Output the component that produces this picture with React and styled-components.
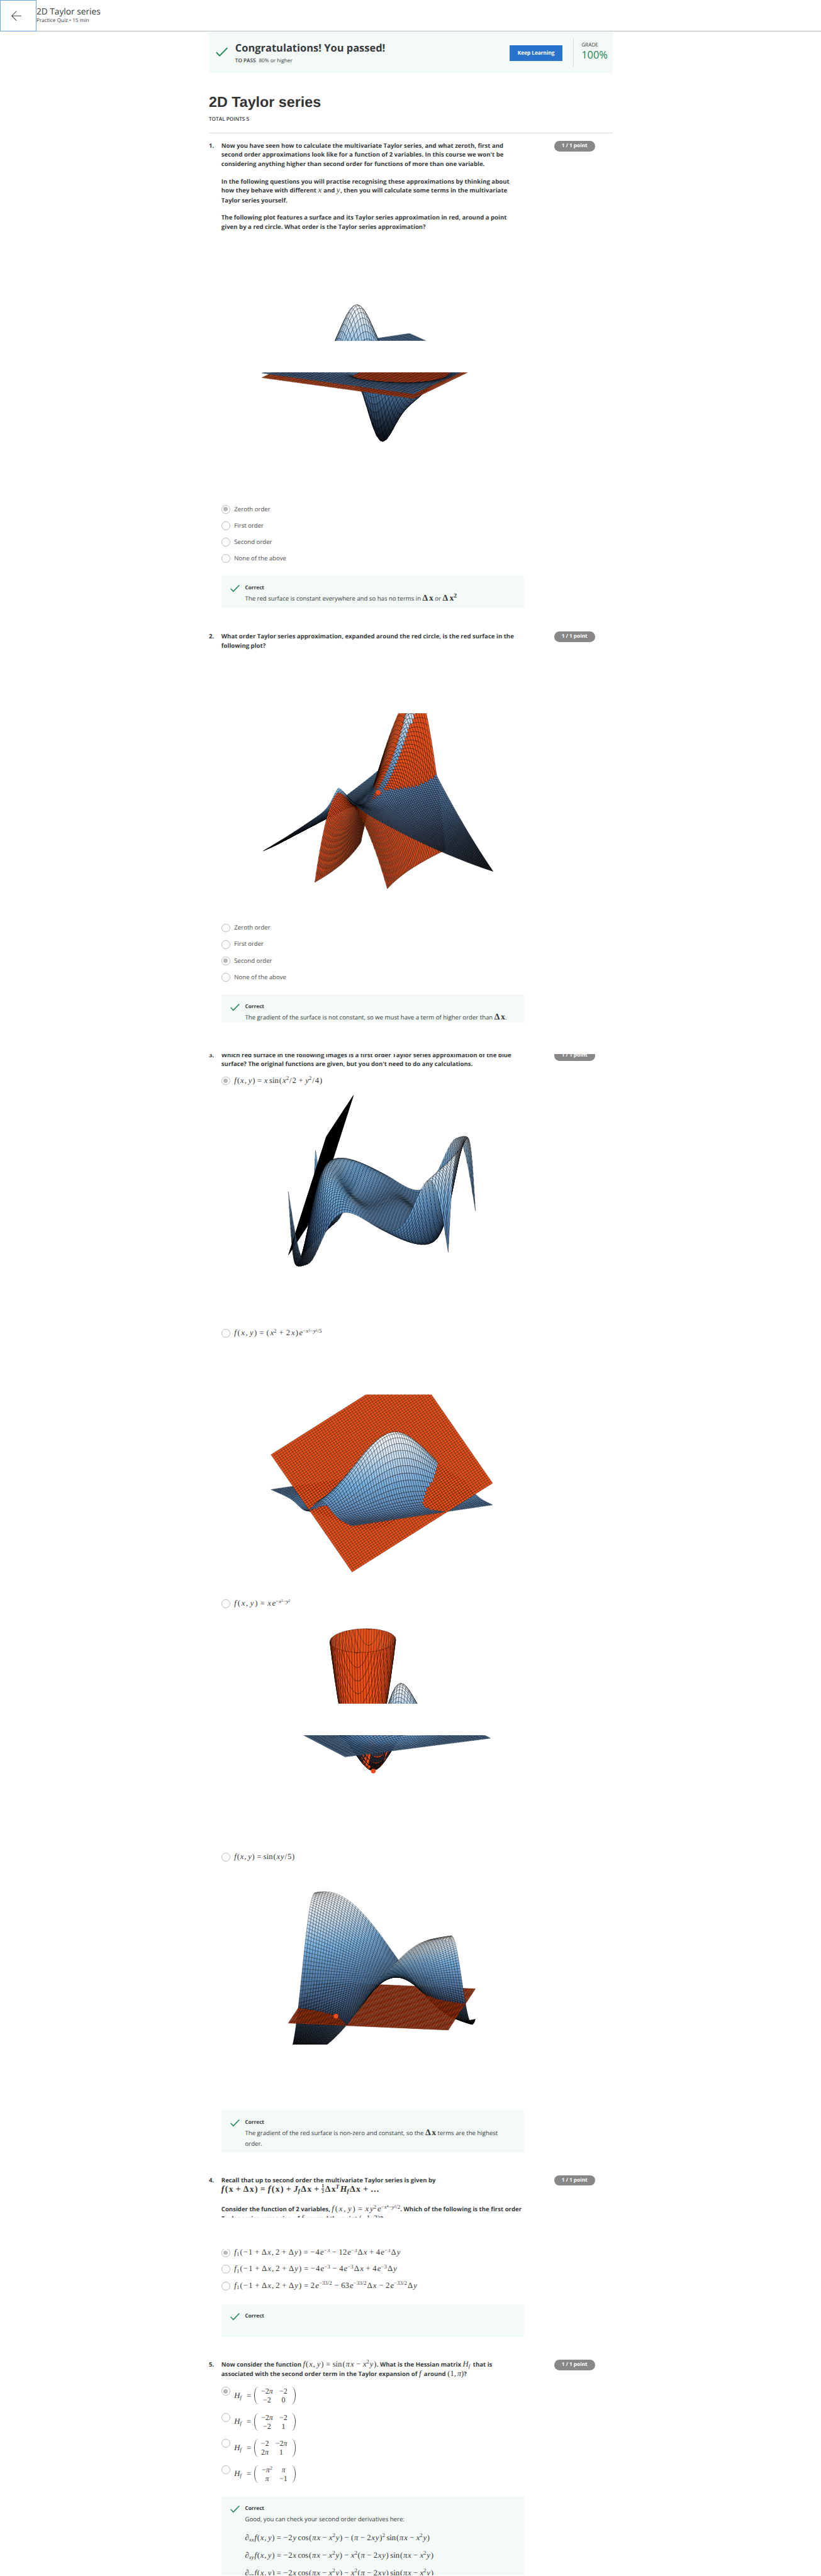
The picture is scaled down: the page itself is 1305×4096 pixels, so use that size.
import React, { useMemo } from "react";
import styled, { createGlobalStyle } from "styled-components";

/* 1rem is ten design pixels */
const Global = createGlobalStyle`
  html { font-size: 6.8585px; background: #fff; }
  body { margin: 0; color: #373a3c; text-rendering: geometricPrecision; }
  *, *::before, *::after { box-sizing: border-box; }
`;

const Page = styled.div`
  width: 190.28rem;
  height: 597.1rem;
  overflow: hidden;
  font-family: "Open Sans", "Noto Sans", sans-serif;
  font-size: 1.4rem;
  line-height: 2.1rem;
`;

const TopBar = styled.header`
  display: flex;
  height: 7.3rem;
  border-bottom: 1px solid #b8bcbf;
`;

const BackButton = styled.button`
  display: flex;
  align-items: center;
  justify-content: center;
  width: 8.45rem;
  height: 7.3rem;
  padding: 0 0.9rem 0 0;
  border: 1px solid #6aa9ea;
  background: #fff;
`;

const TopTitles = styled.div`
  display: flex;
  flex-direction: column;
  padding-top: 1.4rem;
`;

const TopTitle = styled.span`
  font-size: 2rem;
  line-height: 2.6rem;
`;

const TopSub = styled.span`
  font-size: 1.2rem;
  line-height: 1.8rem;
`;

const Main = styled.main`
  width: 93.6rem;
  margin-left: 48.4rem;
`;

const Banner = styled.section`
  display: flex;
  align-items: center;
  height: 9.6rem;
  background: #f3faf8;
  padding-left: 1.6rem;
`;

const BannerText = styled.div`
  flex: 1;
  margin: 0.4rem 0 0 1.7rem;
`;

const BannerTitle = styled.h2`
  margin: 0;
  font-size: 2.4rem;
  font-weight: 700;
  line-height: 3.2rem;
  white-space: nowrap;
`;

const BannerNote = styled.p`
  margin: 0.5rem 0 0;
  font-size: 1.2rem;
  line-height: 1.8rem;
  b { font-weight: 600; margin-right: 0.4rem; }
`;

const KeepLearning = styled.button`
  width: 12.3rem;
  height: 3.6rem;
  margin-top: 0.4rem;
  padding: 0;
  border: 0;
  background: #2a73cc;
  color: #fff;
  font: 700 1.2rem/3.6rem "Open Sans", sans-serif;
  white-space: nowrap;
`;

const Grade = styled.div`
  display: flex;
  flex-direction: column;
  width: 9.2rem;
  height: 6.8rem;
  margin-left: 2.4rem;
  padding: 0.9rem 0 0 1.8rem;
  border-left: 1px solid #dcdfdf;
  font-size: 1.2rem;
  line-height: 1.8rem;
  strong { color: #1f8354; font-size: 2.4rem; font-weight: 400; line-height: 2.6rem; }
`;

const QuizTitle = styled.h1`
  margin: 4.6rem 0 0;
  font: 700 3.4rem/4.4rem "Liberation Sans", Arial, sans-serif;
  color: #333;
`;

const TotalPoints = styled.p`
  margin: 1rem 0 0;
  height: 4rem;
  border-bottom: 1px solid #dcdcdc;
  font-size: 1.2rem;
  font-weight: 600;
  line-height: 1.8rem;
`;

const Question = styled.section`
  display: grid;
  grid-template-columns: 2.9rem 77.1rem 9.5rem;
  align-items: start;
  margin-top: ${(p) => p.$gap}rem;
`;

const Cutoff = styled.div`
  overflow: hidden;
  margin-top: ${(p) => p.$gap || 0}rem;
  height: ${(p) => p.$height}rem;
  &&& > * { margin-top: ${(p) => -(p.$hide || 0)}rem; }
`;

const Number = styled.span`
  display: block;
  padding-top: ${(p) => p.$drop || 0.1}rem;
  font-weight: 700;
`;

const Body = styled.div`
  display: flex;
  flex-direction: column;
  width: 70.1rem;
  padding-top: ${(p) => (p.$drop === undefined ? 0.1 : p.$drop)}rem;
`;

const Badge = styled.span`
  display: block;
  width: 9.5rem;
  height: 2.4rem;
  border-radius: 1.2rem;
  background: #888;
  color: #fff;
  font-size: 1.2rem;
  font-weight: 700;
  line-height: 2.4rem;
  text-align: center;
`;

const Line = styled.p`
  margin: ${(p) => p.$gap || 0}rem 0 0;
  height: ${(p) => p.$height || 2.1}rem;
  font-weight: ${(p) => (p.$light ? 400 : 700)};
  line-height: ${(p) => p.$height || 2.1}rem;
  white-space: nowrap;
`;

const Options = styled.div`
  display: flex;
  flex-direction: column;
  margin-top: ${(p) => p.$gap || 0}rem;
`;

const Option = styled.label`
  display: flex;
  align-items: ${(p) => (p.$tall ? "flex-start" : "center")};
  height: ${(p) => p.$height || 3.8}rem;
  color: #4a4a4a;
  white-space: nowrap;
`;

const Radio = styled.span`
  display: flex;
  align-items: center;
  justify-content: center;
  width: 2rem;
  height: 2rem;
  margin-right: 1rem;
  flex: none;
  border: 0.2rem solid #b8b8b8;
  border-radius: 50%;
  &::after {
    content: "";
    width: 1rem;
    height: 1rem;
    border-radius: 50%;
    background: ${(p) => (p.$on ? "#b8b8b8" : "transparent")};
  }
`;

const Feedback = styled.div`
  display: flex;
  height: ${(p) => p.$height}rem;
  margin-top: ${(p) => p.$gap}rem;
  padding: 1.85rem 0 0 2.1rem;
  background: #f3faf8;
`;

const FeedbackText = styled.div`
  margin-left: 1.2rem;
  white-space: nowrap;
`;

const FeedbackTitle = styled.div`
  font-size: 1.2rem;
  font-weight: 700;
  line-height: 2.1rem;
`;

const Drawing = styled.svg`
  display: block;
  width: 70.1rem;
  height: ${(p) => p.$height}rem;
`;

/* ---------- formulas ---------- */

const Formula = styled.span`
  display: inline-flex;
  align-items: baseline;
  justify-content: space-between;
  width: ${(p) => p.$width}rem;
  height: 2rem;
  color: #333;
  font-family: "Liberation Serif", serif;
  font-size: ${(p) => (p.$bold ? 2 : 1.85)}rem;
  font-weight: ${(p) => (p.$bold ? 700 : 400)};
  line-height: 2rem;
`;

const SPACE = {
  binary: "0 0.2em",
  comma: "0 0.14em 0 0",
  word: "0 0 0 0.14em",
};

const Token = styled.span`
  display: inline-flex;
  align-items: baseline;
  margin: ${(p) => SPACE[p.$kind] || 0};
  font-style: ${(p) => (p.$italic ? "italic" : "normal")};
`;

const Raised = styled.span`
  position: relative;
  top: -0.52em;
  font-size: 0.7em;
  line-height: 1;
`;

const Lowered = styled.span`
  position: relative;
  top: 0.25em;
  font-size: 0.7em;
  line-height: 1;
`;

const Fraction = styled.span`
  display: inline-flex;
  flex-direction: column;
  align-items: center;
  align-self: center;
  font-size: 1.15rem;
  line-height: 1.15rem;
  span:first-child { border-bottom: 1px solid #333; }
`;

const Glyph = styled.span`
  font-style: ${(p) => (p.$italic ? "italic" : "normal")};
`;

const isVar = (s) => /^[a-zA-Zπ∂]$/.test(s);

function tokenize(src) {
  const out = [];
  let i = 0;
  while (i < src.length) {
    const word = /^(sin|cos)/.exec(src.slice(i));
    const prev = out.length ? out[out.length - 1].t : "(";
    if (word) {
      out.push({ t: word[0], kind: prev === "=" ? undefined : "word" });
      i += 3;
    } else if ((src[i] === "^" || src[i] === "_") && out.length) {
      const end = src.indexOf("}", i);
      out[out.length - 1][src[i]] = src.slice(i + 2, end);
      i = end + 1;
    } else if (/\d/.test(src[i])) {
      const n = /^\d+/.exec(src.slice(i))[0];
      out.push({ t: n });
      i += n.length;
    } else {
      let kind;
      if (src[i] === "=") kind = "binary";
      if (/[+−]/.test(src[i]) && !/[(=]/.test(prev)) kind = "binary";
      if (src[i] === ",") kind = "comma";
      if (src[i] === "=" && i === src.length - 1) kind = undefined;
      out.push({ t: src[i], kind });
      i += 1;
    }
  }
  return out;
}

const letters = (s) => s.split("").map((c, k) => <Glyph key={k} $italic={isVar(c)}>{c}</Glyph>);

function Tex({ src, w, bold, upright }) {
  return (
    <Formula $width={w} $bold={bold}>
      {tokenize(src).map((k, i) =>
        k.t === "½" ? (
          <Fraction key={i}><span>1</span><span>2</span></Fraction>
        ) : (
          <Token key={i} $kind={k.kind} $italic={isVar(k.t) && !(upright && k.t === "x")}>
            {k.t}
            {k["^"] && <Raised>{letters(k["^"])}</Raised>}
            {k["_"] && <Lowered>{letters(k["_"])}</Lowered>}
          </Token>
        )
      )}
    </Formula>
  );
}

const MatrixRow = styled.span`
  display: flex;
  align-items: center;
  height: 4.1rem;
`;

const MatrixBox = styled.span`
  display: grid;
  grid-template-columns: ${(p) => p.$cols};
  grid-template-rows: 2.05rem 2.05rem;
  justify-items: center;
  width: 9.6rem;
  height: 4.1rem;
  margin-left: 0.7rem;
  padding: 0 1rem;
  border: solid #444;
  border-width: 0 1px;
  border-radius: 1rem / 2.05rem;
  color: #333;
  font-family: "Liberation Serif", serif;
  font-size: 1.75rem;
  line-height: 2.05rem;
`;

const Cell = styled.span`
  display: inline-flex;
  align-items: baseline;
  line-height: 2.05rem;
`;

function Matrix({ cells, cols }) {
  return (
    <MatrixRow>
      <Tex src="H_{f}=" w={3.9} />
      <MatrixBox $cols={cols}>
        {cells.map((c, i) => (
          <Cell key={i}>
            {letters(c.replace("²", ""))}
            {c.includes("²") && <Raised>2</Raised>}
          </Cell>
        ))}
      </MatrixBox>
    </MatrixRow>
  );
}

/* ---------- surface plots ---------- */

const PITCH_SIN = 0.2588;
const PITCH_COS = 0.9659;
const RED = "#ea4f18";
const STOPS = [
  [0, [0, 0, 0]],
  [0.2, [32, 47, 66]],
  [0.35, [66, 100, 138]],
  [0.5, [86, 132, 180]],
  [0.68, [120, 178, 226]],
  [0.85, [200, 222, 240]],
  [1, [255, 255, 255]],
];

function blue(t) {
  const v = Math.min(1, Math.max(0, t));
  for (let i = 1; i < STOPS.length; i++) {
    const [b, cb] = STOPS[i];
    const [a, ca] = STOPS[i - 1];
    if (v <= b) {
      const k = (v - a) / (b - a);
      return "rgb(" + ca.map((c, j) => Math.round(c + (cb[j] - c) * k)).join(",") + ")";
    }
  }
  return "#fff";
}

function clipHeight(poly, limit, sign) {
  const out = [];
  poly.forEach((a, i) => {
    const b = poly[(i + 1) % poly.length];
    const da = sign * (limit - a.z);
    const db = sign * (limit - b.z);
    if (da >= 0) out.push(a);
    if (da >= 0 !== db >= 0) {
      const k = da / (da - db);
      out.push({ x: a.x + (b.x - a.x) * k, y: a.y + (b.y - a.y) * k, d: a.d + (b.d - a.d) * k, z: limit });
    }
  });
  return out;
}

function buildCells({ cx, cy, s, yaw, top = 0, bottom = 1e5, surfaces, n = 60 }) {
  const a = (yaw * Math.PI) / 180;
  const ca = Math.cos(a);
  const sa = Math.sin(a);
  const cells = [];
  surfaces.forEach((surf) => {
    const p0 = surf.p ? surf.p[0] : -1;
    const p1 = surf.p ? surf.p[1] : 1;
    const grid = [];
    for (let i = 0; i <= n; i++) {
      const row = [];
      for (let j = 0; j <= n; j++) {
        const p = p0 + ((p1 - p0) * i) / n;
        const q = -1 + (2 * j) / n;
        const gx = s * (p * ca + q * sa);
        const gf = s * (p * sa - q * ca);
        const z = surf.f(p, q, gx, gf);
        row.push({ x: cx + gx, y: cy + gf * PITCH_SIN - z, z, d: gf * PITCH_COS + (z / PITCH_COS) * PITCH_SIN });
      }
      grid.push(row);
    }
    for (let i = 0; i < n; i++) {
      for (let j = 0; j < n; j++) {
        let poly = [grid[i][j], grid[i + 1][j], grid[i + 1][j + 1], grid[i][j + 1]];
        const z = (poly[0].z + poly[1].z + poly[2].z + poly[3].z) / 4;
        if (surf.max !== undefined) poly = clipHeight(poly, surf.max, 1);
        if (surf.min !== undefined && poly.length) poly = clipHeight(poly, surf.min, -1);
        if (poly.length < 3) continue;
        if (poly.every((v) => v.y < top) || poly.every((v) => v.y > bottom)) continue;
        cells.push({
          d: poly.reduce((t, v) => t + v.d, 0) / poly.length,
          path: "M" + poly.map((v) => v.x.toFixed(1) + " " + v.y.toFixed(1)).join("L") + "Z",
          fill: surf.fill || blue(0.5 + z / (2 * surf.range)),
        });
      }
    }
  });
  return cells.sort((m, k) => m.d - k.d);
}

function Plot({ view, id, dot }) {
  const cells = useMemo(() => buildCells(view), [view]);
  const top = view.top || 0;
  const bottom = view.bottom || 6000;
  return (
    <>
      <clipPath id={id}>
        <rect x="480" y={top} width="760" height={bottom - top} />
      </clipPath>
      <g clipPath={`url(#${id})`} stroke="#000" strokeWidth="0.5" strokeLinejoin="round">
        {cells.map((c, i) => (
          <path key={i} d={c.path} fill={c.fill} />
        ))}
      </g>
      {dot && <circle cx={dot[0]} cy={dot[1]} r="5.5" fill="#ec4a1c" />}
    </>
  );
}

function Figure({ from, to, children }) {
  return (
    <Drawing $height={(to - from) / 10} viewBox={`513 ${from} 701 ${to - from}`} preserveAspectRatio="none">
      {children}
    </Drawing>
  );
}

const gauss = (x, y, cx, cy, w) => Math.exp(-((x - cx) ** 2 + (y - cy) ** 2) / (w * w));

const hillTop = {
  cx: 876, cy: 843, s: 199.5, yaw: -30, bottom: 789.5,
  surfaces: [{ f: (p, q, x, y) => 157 * gauss(x, y, -49, 77, 58), range: 165 }],
};
const hillBottom = {
  cx: 876.3, cy: 843, s: 199.5, yaw: 28, top: 863,
  surfaces: [
    {
      f: (p, q, x, y) => 150 * gauss(x, y, -72, -22, 52) - 134 * gauss(x, y, 3, 48, 43) - 78 * gauss(x, y, 66, 34, 70),
      range: 185,
    },
    { f: () => -10.7, fill: RED },
  ],
};

const ridge = {
  cx: 876, cy: 1837, s: 199.5, yaw: -26.1, top: 1653,
  surfaces: [
    {
      f: (p, q) => {
        const u = (p - q) / 2;
        const v = (p + q) / 2;
        const side = 5 - 164 * Math.sqrt(u * u + 0.002) + 55 * v * v;
        const crest = 60 * v + 140 * v * v;
        return side + (crest + 2.3 - 55 * v * v) * Math.exp(-(u * u) / 0.013);
      },
      range: 170,
    },
    { f: (p, q) => 29 * (p + q) + 1014 * p * q - 443 * (p * p + q * q), fill: RED, min: -168 },
  ],
};

const wave = {
  cx: 884.8, cy: 2784, s: 187.9, yaw: 9.66,
  surfaces: [
    { f: (p, q) => 46 * -3 * p * Math.sin(4.5 * p * p + 2.25 * q * q), range: 150 },
    { f: (p) => -85 + ((p + 1) / 0.476) * 279, p: [-1, -0.524], fill: "#000" },
  ],
};

const tilted = {
  cx: 884.6, cy: 3471.1, s: 188, yaw: 60, top: 3233.2,
  surfaces: [
    { f: (p, q) => 137 * (9 * p * p + 6 * p) * Math.exp(-9 * p * p - 1.8 * q * q), range: 162 },
    { f: (p, q) => 65.6 - 93.9 * p + 78.7 * q, fill: RED },
  ],
};

const bump = (p, q) => 248 * 3 * p * Math.exp(-9 * (p * p + q * q));
const cup = (p, q) => 248 * (-0.429 + 0.858 * (3 * p + 0.707) ** 2 + 0.429 * 9 * q * q);
const cupSurfaces = [
  { f: bump, range: 107 },
  { f: cup, fill: RED, max: 203 },
];
const cupTop = { cx: 884.6, cy: 4008, s: 188, yaw: 7.5, bottom: 3949.5, surfaces: cupSurfaces };
const cupBottom = { cx: 884.6, cy: 4008, s: 188, yaw: 63.6, top: 4023, surfaces: cupSurfaces };

const saddle = {
  cx: 884.8, cy: 4582, s: 187.9, yaw: 9.66, bottom: 4739.5,
  surfaces: [
    { f: (p, q) => -142 * Math.sin(1.8 * p * q), range: 142 },
    { f: () => -68, fill: "#dd4614" },
  ],
};

/* ---------- page ---------- */

const Icon = styled.svg`
  width: ${(p) => p.$size}rem;
  height: ${(p) => p.$size}rem;
  flex: none;
`;

const Check = ({ size = 2.2 }) => (
  <Icon $size={size} viewBox="0 0 22 22">
    <path d="M1 11.5 7 18 21 3.5" fill="none" stroke="#1f8354" strokeWidth="2.1" />
  </Icon>
);

const Orders = ({ picked }) =>
  ["Zeroth order", "First order", "Second order", "None of the above"].map((t, i) => (
    <Option key={t}><Radio $on={i === picked} />{t}</Option>
  ));

const Correct = ({ children, ...rest }) => (
  <Feedback {...rest}>
    <Check />
    <FeedbackText>
      <FeedbackTitle>Correct</FeedbackTitle>
      {children}
    </FeedbackText>
  </Feedback>
);

export default function App() {
  return (
    <Page>
      <Global />
      <TopBar>
        <BackButton aria-label="Back">
          <Icon $size={2.4} viewBox="0 0 24 24">
            <path d="M24 12H1M12 1 1 12l11 11" fill="none" stroke="#3c464e" strokeWidth="1.5" />
          </Icon>
        </BackButton>
        <TopTitles>
          <TopTitle>2D Taylor series</TopTitle>
          <TopSub>Practice Quiz • 15 min</TopSub>
        </TopTitles>
      </TopBar>
      <Main>
        <Banner>
          <Check size={2.8} />
          <BannerText>
            <BannerTitle>Congratulations! You passed!</BannerTitle>
            <BannerNote><b>TO PASS</b> 80% or higher</BannerNote>
          </BannerText>
          <KeepLearning>Keep Learning</KeepLearning>
          <Grade>GRADE<strong>100%</strong></Grade>
        </Banner>
        <QuizTitle>2D Taylor series</QuizTitle>
        <TotalPoints>TOTAL POINTS 5</TotalPoints>

        <Question $gap={1.8}>
          <Number $drop={0.1}>1.</Number>
          <Body $drop={0.1}>
            <Line>Now you have seen how to calculate the multivariate Taylor series, and what zeroth, first and</Line>
            <Line>second order approximations look like for a function of 2 variables. In this course we won't be</Line>
            <Line>considering anything higher than second order for functions of more than one variable.</Line>
            <Line $gap={2}>In the following questions you will practise recognising these approximations by thinking about</Line>
            <Line>how they behave with different <Tex src="x" w={0.9} /> and <Tex src="y" w={0.9} />, then you will calculate some terms in the multivariate</Line>
            <Line $height={2.2}>Taylor series yourself.</Line>
            <Line $gap={2}>The following plot features a surface and its Taylor series approximation in red, around a point</Line>
            <Line>given by a red circle. What order is the Taylor series approximation?</Line>
            <Figure from={536} to={1161}>
              <Plot id="hill-top" view={hillTop} />
              <Plot id="hill-bottom" view={hillBottom} />
            </Figure>
            <Orders picked={0} />
            <Correct $gap={2.1} $height={7.6}>
              <Line $light $height={2.8}>The red surface is constant everywhere and so has no terms in <Tex bold upright src="Δx" w={2.5} /> or <Tex bold upright src="Δx^{2}" w={3.3} /></Line>
            </Correct>
          </Body>
          <Badge>1 / 1 point</Badge>
        </Question>

        <Question $gap={5.4}>
          <Number>2.</Number>
          <Body>
            <Line>What order Taylor series approximation, expanded around the red circle, is the red surface in the</Line>
            <Line>following plot?</Line>
            <Figure from={1507} to={2132}>
              <Plot id="ridge" view={ridge} dot={[876.3, 1836.5]} />
            </Figure>
            <Orders picked={2} />
            <Correct $gap={2.1} $height={6.5}>
              <Line $light $height={2.8}>The gradient of the surface is not constant, so we must have a term of higher order than <Tex bold upright src="Δx" w={2.5} />.</Line>
            </Correct>
          </Body>
          <Badge>1 / 1 point</Badge>
        </Question>

        <Question $gap={7.3}>
          <Cutoff $hide={0.75} $height={1.4}><Number $drop={0.01}>3.</Number></Cutoff>
          <Body $drop={0}>
            <Cutoff $hide={0.75} $height={1.35}>
              <Line>Which red surface in the following images is a first order Taylor series approximation of the blue</Line>
            </Cutoff>
            <Line>surface? The original functions are given, but you don't need to do any calculations.</Line>
            <Option $height={5.55}><Radio $on /><Tex src="f(x,y)=xsin(x^{2}/2+y^{2}/4)" w={20.4} /></Option>
            <Figure from={2533} to={3072}>
              <Plot id="wave" view={wave} />
            </Figure>
            <Option><Radio /><Tex src="f(x,y)=(x^{2}+2x)e^{−x²−y²/5}" w={20.3} /></Option>
            <Figure from={3110} to={3699}>
              <Plot id="tilted" view={tilted} />
            </Figure>
            <Option><Radio /><Tex src="f(x,y)=xe^{−x²−y²}" w={13} /></Option>
            <Figure from={3737} to={4286}>
              <Plot id="cup-top" view={cupTop} />
              <Plot id="cup-bottom" view={cupBottom} dot={[865, 4106]} />
            </Figure>
            <Option><Radio /><Tex src="f(x,y)=sin(xy/5)" w={14} /></Option>
            <Figure from={4324} to={4892}>
              <Plot id="saddle" view={saddle} dot={[778.4, 4673.6]} />
            </Figure>
            <Correct $gap={0} $height={9.8}>
              <Line $light $height={2.8}>The gradient of the red surface is non-zero and constant, so the <Tex bold upright src="Δx" w={2.5} /> terms are the highest</Line>
              <Line $light>order.</Line>
            </Correct>
          </Body>
          <Cutoff $hide={0.8} $height={1.6}><Badge>1 / 1 point</Badge></Cutoff>
        </Question>

        <Question $gap={5.3}>
          <Number>4.</Number>
          <Body>
            <Line>Recall that up to second order the multivariate Taylor series is given by</Line>
            <Line $height={2.25}><Tex bold upright src="f(x+Δx)=f(x)+J_{f}Δx+½Δx^{T}H_{f}Δx+…" w={36.6} /></Line>
            <Line $gap={2.3} $height={2.2}>Consider the function of 2 variables, <Tex src="f(x,y)=xy^{2}e^{−x⁴−y²/2}" w={15.9} />. Which of the following is the first order</Line>
            <Cutoff $height={0.85}>
              <Line $height={2.3}>Taylor series expansion of <Tex src="f" w={0.8} /> around the point <Tex src="(−1,2)" w={4.9} />?</Line>
            </Cutoff>
            <Cutoff $gap={7.35} $hide={1.1} $height={2.7}>
              <Option><Radio $on /><Tex src="f_{1}(−1+Δx,2+Δy)=−4e^{−3}−12e^{−3}Δx+4e^{−3}Δy" w={38.5} /></Option>
            </Cutoff>
            <Option $height={3.86}><Radio /><Tex src="f_{1}(−1+Δx,2+Δy)=−4e^{−3}−4e^{−3}Δx+4e^{−3}Δy" w={37.7} /></Option>
            <Option $height={3.86}><Radio /><Tex src="f_{1}(−1+Δx,2+Δy)=2e^{−33/2}−63e^{−33/2}Δx−2e^{−33/2}Δy" w={42.4} /></Option>
            <Correct $gap={2.3} $height={7.6} />
          </Body>
          <Badge>1 / 1 point</Badge>
        </Question>

        <Question $gap={5.3}>
          <Number>5.</Number>
          <Body>
            <Line>Now consider the function <Tex src="f(x,y)=sin(πx−x^{2}y)" w={17.1} />. What is the Hessian matrix <Tex src="H_{f}" w={2} /> that is</Line>
            <Line $height={2.2}>associated with the second order term in the Taylor expansion of <Tex src="f" w={0.8} /> around <Tex src="(1,π)" w={3.8} />?</Line>
            <Options $gap={1.9}>
              <Option $tall $height={6.06}><Radio $on /><Matrix cols="3.7rem 3.9rem" cells={["−2π", "−2", "−2", "0"]} /></Option>
              <Option $tall $height={6.06}><Radio /><Matrix cols="3.7rem 3.9rem" cells={["−2π", "−2", "−2", "1"]} /></Option>
              <Option $tall $height={6.06}><Radio /><Matrix cols="2.7rem 4.9rem" cells={["−2", "−2π", "2π", "1"]} /></Option>
              <Option $tall $height={6.06}><Radio /><Matrix cols="3.7rem 3.9rem" cells={["−π²", "π", "π", "−1"]} /></Option>
            </Options>
            <Correct $gap={1.1} $height={18.8}>
              <Line $light $height={2.9}>Good, you can check your second order derivatives here:</Line>
              <Line $light $gap={0.8} $height={4.1}><Tex src="∂_{xx}f(x,y)=−2ycos(πx−x^{2}y)−(π−2xy)^{2}sin(πx−x^{2}y)" w={42.8} /></Line>
              <Line $light $height={4.1}><Tex src="∂_{xy}f(x,y)=−2xcos(πx−x^{2}y)−x^{2}(π−2xy)sin(πx−x^{2}y)" w={43.7} /></Line>
              <Line $light $height={4.1}><Tex src="∂_{yx}f(x,y)=−2xcos(πx−x^{2}y)−x^{2}(π−2xy)sin(πx−x^{2}y)" w={43.7} /></Line>
            </Correct>
          </Body>
          <Badge>1 / 1 point</Badge>
        </Question>
      </Main>
    </Page>
  );
}
